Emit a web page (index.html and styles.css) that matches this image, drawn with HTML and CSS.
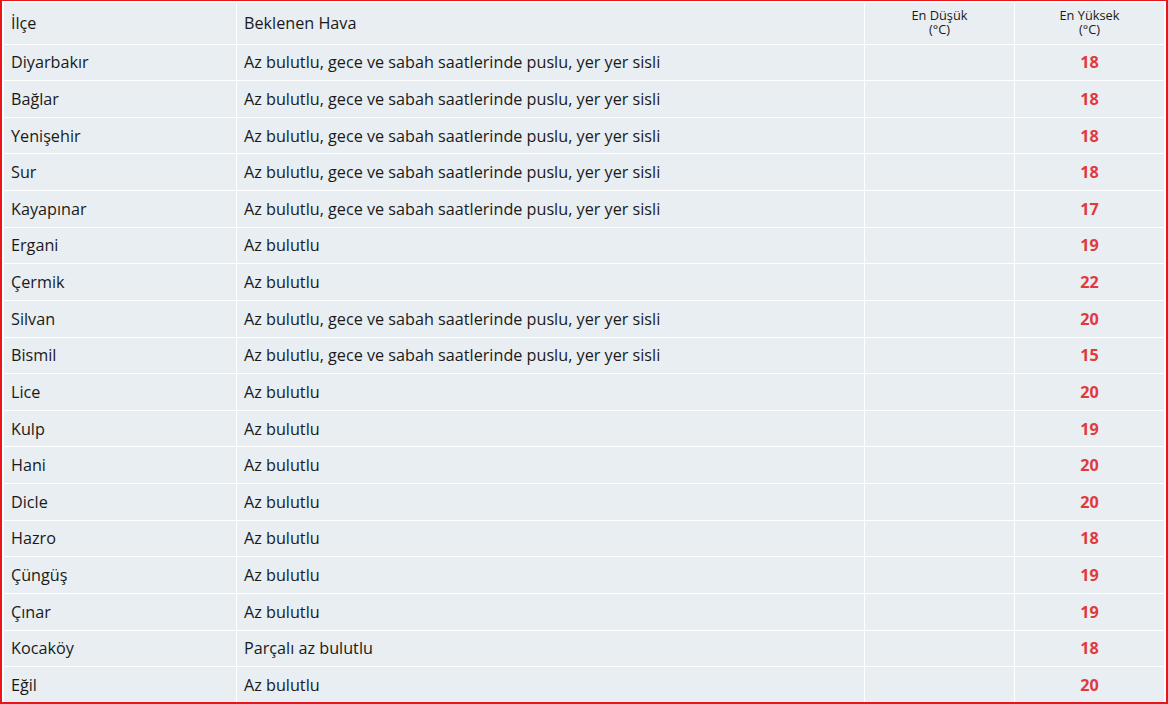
FILE: index.html
```html
<!DOCTYPE html>
<html lang="tr">
<head>
  <meta charset="UTF-8">
  <meta name="viewport" content="width=device-width, initial-scale=1.0">
  <title>İlçe Hava Tahmini</title>
  <link rel="stylesheet" href="styles.css">
</head>
<body>
  <div class="frame">
    <table class="forecast">
      <colgroup>
        <col class="col-ilce">
        <col class="col-hava">
        <col class="col-temp">
        <col class="col-temp">
      </colgroup>
      <thead>
        <tr>
          <th>İlçe</th>
          <th>Beklenen Hava</th>
          <th class="small">En Düşük<br>(°C)</th>
          <th class="small">En Yüksek<br>(°C)</th>
        </tr>
      </thead>
      <tbody>
        <tr><td>Diyarbakır</td><td>Az bulutlu, gece ve sabah saatlerinde puslu, yer yer sisli</td><td></td><td class="max">18</td></tr>
        <tr><td>Bağlar</td><td>Az bulutlu, gece ve sabah saatlerinde puslu, yer yer sisli</td><td></td><td class="max">18</td></tr>
        <tr><td>Yenişehir</td><td>Az bulutlu, gece ve sabah saatlerinde puslu, yer yer sisli</td><td></td><td class="max">18</td></tr>
        <tr><td>Sur</td><td>Az bulutlu, gece ve sabah saatlerinde puslu, yer yer sisli</td><td></td><td class="max">18</td></tr>
        <tr><td>Kayapınar</td><td>Az bulutlu, gece ve sabah saatlerinde puslu, yer yer sisli</td><td></td><td class="max">17</td></tr>
        <tr><td>Ergani</td><td>Az bulutlu</td><td></td><td class="max">19</td></tr>
        <tr><td>Çermik</td><td>Az bulutlu</td><td></td><td class="max">22</td></tr>
        <tr><td>Silvan</td><td>Az bulutlu, gece ve sabah saatlerinde puslu, yer yer sisli</td><td></td><td class="max">20</td></tr>
        <tr><td>Bismil</td><td>Az bulutlu, gece ve sabah saatlerinde puslu, yer yer sisli</td><td></td><td class="max">15</td></tr>
        <tr><td>Lice</td><td>Az bulutlu</td><td></td><td class="max">20</td></tr>
        <tr><td>Kulp</td><td>Az bulutlu</td><td></td><td class="max">19</td></tr>
        <tr><td>Hani</td><td>Az bulutlu</td><td></td><td class="max">20</td></tr>
        <tr><td>Dicle</td><td>Az bulutlu</td><td></td><td class="max">20</td></tr>
        <tr><td>Hazro</td><td>Az bulutlu</td><td></td><td class="max">18</td></tr>
        <tr><td>Çüngüş</td><td>Az bulutlu</td><td></td><td class="max">19</td></tr>
        <tr><td>Çınar</td><td>Az bulutlu</td><td></td><td class="max">19</td></tr>
        <tr><td>Kocaköy</td><td>Parçalı az bulutlu</td><td></td><td class="max">18</td></tr>
        <tr><td>Eğil</td><td>Az bulutlu</td><td></td><td class="max">20</td></tr>
      </tbody>
    </table>
  </div>
</body>
</html>
```

FILE: styles.css
```css
body {
  margin: 0;
  padding: 0;
  font-family: "Open Sans", sans-serif;
  color: #1a1a1a;
}
.frame {
  box-sizing: border-box;
  width: 1168px;
  height: 704px;
  border: 2px solid #e8151b;
  border-top-width: 1px;
  padding: 1px 1px 0 1px;
  background: #fff;
  overflow: hidden;
}
.forecast {
  width: 100%;
  border-collapse: collapse;
  background: #e8eef1;
  table-layout: fixed;
}
.col-ilce {
  width: 233px;
}
.col-hava {
  width: 628px;
}
.col-temp {
  width: 150px;
}
.forecast th,
.forecast td {
  border: 1px solid #fff;
  text-align: left;
  font-weight: normal;
  font-size: 16.2px;
  line-height: 22px;
  padding: 6.82px 7px;
  white-space: nowrap;
}
.forecast th {
  height: 26.5px;
  padding-top: 7px;
  padding-bottom: 7px;
}
.forecast th.small {
  font-size: 12.8px;
  line-height: 13.5px;
  text-align: center;
  vertical-align: top;
  padding-top: 6px;
  padding-bottom: 0;
}
.forecast td.max {
  text-align: center;
  color: #e03a3e;
  font-weight: bold;
}
```
